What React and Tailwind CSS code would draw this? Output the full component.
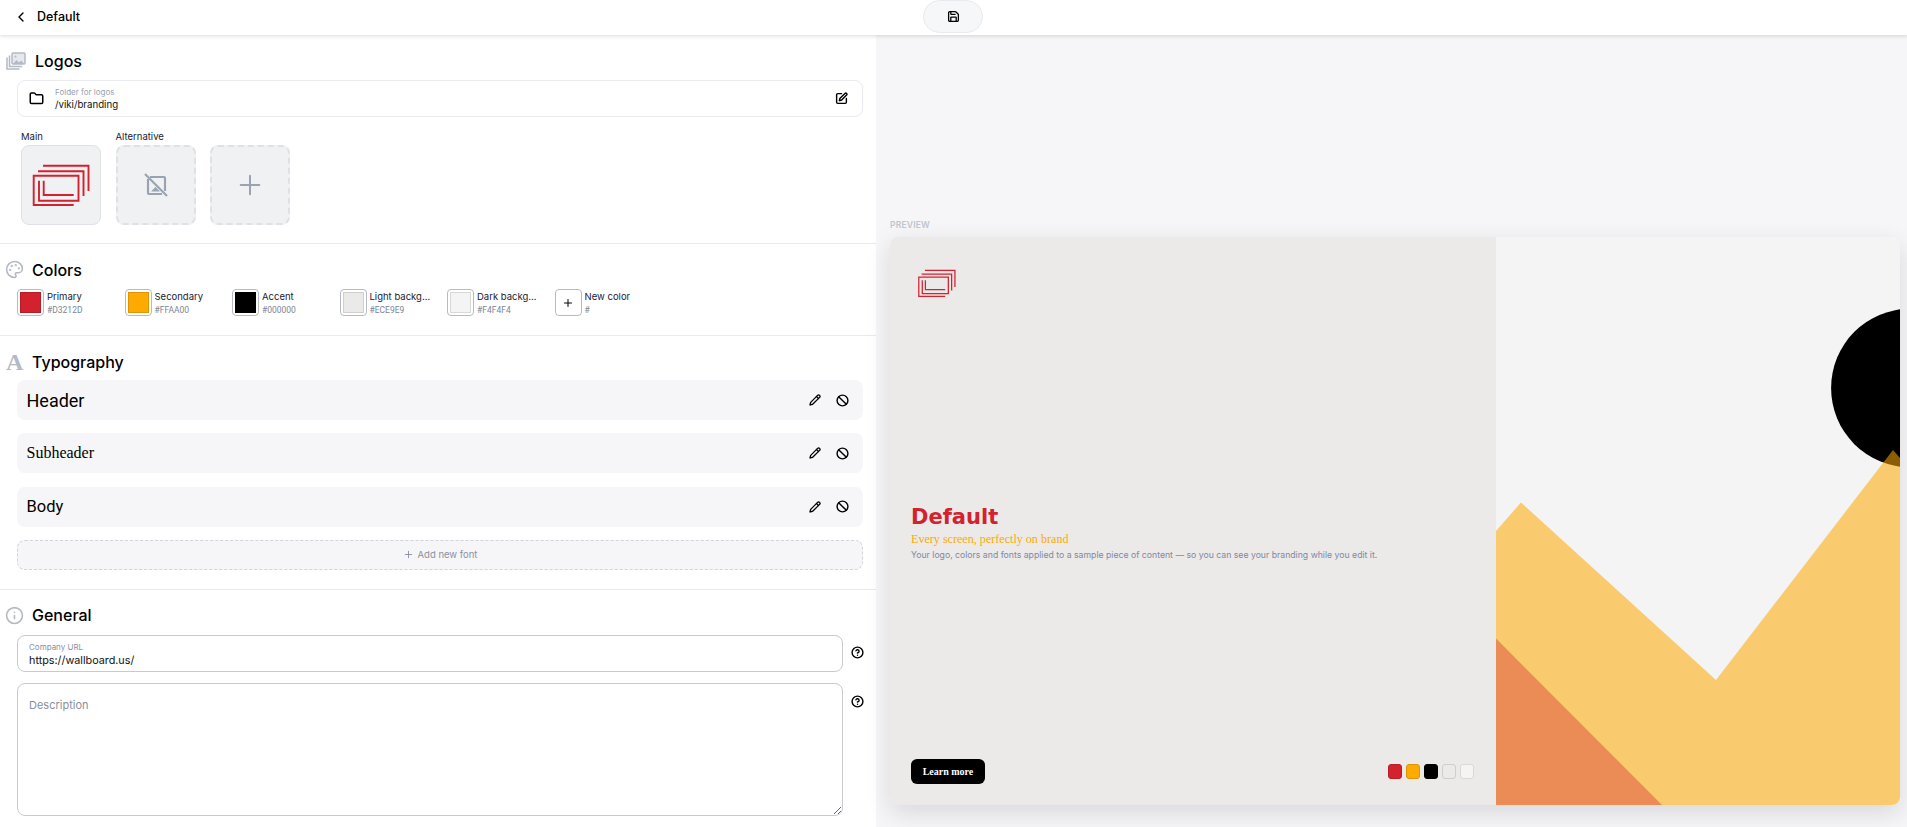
import React from 'react';
import { ChevronLeft, Folder, SquarePen, Save, Pencil, Ban, CircleHelp, Plus, Palette, Info } from 'lucide-react';

const colors = [
  { name: 'Primary', hex: '#D3212D', fill: 'bg-[#D3212D] border-[#b81c27]' },
  { name: 'Secondary', hex: '#FFAA00', fill: 'bg-[#FFAA00] border-[#e09500]' },
  { name: 'Accent', hex: '#000000', fill: 'bg-[#000000] border-[#000000]' },
  { name: 'Light background', hex: '#ECE9E9', fill: 'bg-[#ECE9E9] border-[#d0cdcd]' },
  { name: 'Dark background', hex: '#F4F4F4', fill: 'bg-[#F4F4F4] border-[#d8d8d8]' },
];

const fonts = [
  { name: 'Header', cls: "font-['Roboto',sans-serif] text-[18px]" },
  { name: 'Subheader', cls: "font-['Liberation_Serif',serif] text-[16px]" },
  { name: 'Body', cls: "font-['Roboto',sans-serif] text-[16.5px] pt-[1px]" },
];

function BrandLogo({ className }) {
  return (
    <svg viewBox="0 0 66 52" className={className} fill="none" stroke="#D3212D" strokeWidth="1.9">
      <path d="M15 6.7H60.5V32" />
      <path d="M10 12.3H55.5V37" />
      <path d="M45.7 46H5.7V16.7H50.5V41.7H11V21.7" />
      <path d="M15.7 21.7V36H45.7" />
    </svg>
  );
}

function LogosIcon() {
  return (
    <svg viewBox="0 0 20 18" className="w-[20px] h-[18px]" fill="none" stroke="#b4b9c6" strokeWidth="1.5">
      <rect x="6" y="1" width="13" height="11" rx="1" fill="#e6e8ee" />
      <path d="M7 12l3.5-4 2.5 2.5 2-2 3.5 3.5z" fill="#b4b9c6" stroke="none" />
      <circle cx="9.5" cy="4.5" r="1" fill="#b4b9c6" stroke="none" />
      <path d="M3.5 3.5V14.5H16" />
      <path d="M1 5.5V17H13.5" />
    </svg>
  );
}

function NoImageIcon() {
  return (
    <svg viewBox="0 0 24 24" className="w-[24px] h-[24px]" fill="none" stroke="#9aa3b2" strokeWidth="2.2">
      <path d="M6 4H20a1 1 0 0 1 1 1V18" />
      <path d="M4 6V20a1 1 0 0 0 1 1H18" />
      <path d="M7 18.5l4.5-4.5 4.5 4.5z" fill="#9aa3b2" stroke="none" />
      <path d="M1 1L23 23" />
    </svg>
  );
}

function SectionTitle({ icon, title, textClass = 'w-[26px]' }) {
  return (
    <div className="flex items-center h-[24px] pt-[1px] pl-[6px]">
      <div className={`${textClass} shrink-0 flex items-center`}>{icon}</div>
      <h2 className="text-[16px] font-medium text-black">{title}</h2>
    </div>
  );
}

function LogoTile({ label, dashed, children }) {
  return (
    <div className="w-[80px]">
      <div className="h-[12px] text-[9.5px] leading-[12px] text-[#1c2230] mb-[2px] whitespace-nowrap">{label}</div>
      <div className={`w-[80px] h-[80px] rounded-lg bg-[#f0f1f3] flex items-center justify-center ${dashed ? 'border-2 border-dashed border-[#dfe1e6]' : 'border border-[#dfe1e6]'}`}>
        {children}
      </div>
    </div>
  );
}

function ColorItem({ name, hex, children }) {
  return (
    <div className="w-[107.5px] flex gap-[3px]">
      {children}
      <div className="min-w-0 pt-[1px]">
        <div className="w-[62px] truncate text-[9.5px] leading-[13px] h-[13px] text-[#1c2230]">{name}</div>
        <div className="text-[8.5px] leading-[12px] mt-[1px] text-[#7d8494] font-['Roboto',sans-serif]">{hex}</div>
      </div>
    </div>
  );
}

export default function App() {
  return (
    <div className="h-screen w-full overflow-hidden flex flex-col bg-white font-['Inter',sans-serif]">
      <header className="relative z-10 h-[35px] shrink-0 bg-white shadow-[0_1px_4px_rgba(20,24,40,0.16)] grid grid-cols-[923px_60px_1fr] items-start">
        <div className="flex items-center h-[35px] pl-[13px]">
          <ChevronLeft size={16} strokeWidth={2} className="text-black mb-[2px]" />
          <span className="ml-[8px] text-[12.5px] font-medium text-black">Default</span>
        </div>
        <button className="w-[60px] h-[33px] rounded-full bg-[#f6f7f9] border border-[#e8eaee] flex items-center justify-center">
          <Save size={13} strokeWidth={2.4} className="text-black" />
        </button>
        <div />
      </header>

      <div className="flex-1 flex min-h-0">
        <div className="w-[876px] shrink-0 bg-white">
          <section className="pt-[13px] pb-[18px] border-b border-[#e8e9ec]">
            <SectionTitle icon={<LogosIcon />} title="Logos" textClass="w-[29px]" />
            <div className="mt-[8px] ml-[17px] mr-[13px] h-[37px] border border-[#e8eaf0] rounded-lg flex items-center pl-[11px] pr-[14px]">
              <Folder size={15} strokeWidth={2.4} className="text-black" />
              <div className="ml-[11px] flex-1">
                <div className="text-[8px] leading-[11px] text-[#9aa0ae]">Folder for logos</div>
                <div className="text-[9.7px] leading-[13px] text-[#111]">/viki/branding</div>
              </div>
              <SquarePen size={13} strokeWidth={2.6} className="text-black" />
            </div>
            <div className="mt-[14px] pl-[21px] flex gap-[14.5px]">
              <LogoTile label="Main">
                <BrandLogo className="w-[66px] h-[52px]" />
              </LogoTile>
              <LogoTile label="Alternative" dashed>
                <NoImageIcon />
              </LogoTile>
              <LogoTile label="" dashed>
                <Plus size={32} strokeWidth={1.5} className="text-[#9aa3b2]" />
              </LogoTile>
            </div>
          </section>

          <section className="pt-[13px] pb-[19px] border-b border-[#e8e9ec]">
            <SectionTitle icon={<Palette size={19} strokeWidth={2} className="text-[#b4b9c6] -ml-[1px]" />} title="Colors" />
            <div className="mt-[8px] pl-[17px] flex">
              {colors.map((c) => (
                <ColorItem key={c.name} name={c.name} hex={c.hex}>
                  <div className="w-[27px] h-[27px] shrink-0 rounded-[4px] border border-[#b5bac4] bg-white p-[2px]">
                    <div className={`w-full h-full border ${c.fill}`} />
                  </div>
                </ColorItem>
              ))}
              <ColorItem name="New color" hex="#">
                <div className="w-[27px] h-[27px] shrink-0 rounded-[4px] border border-[#b5bac4] bg-white flex items-center justify-center">
                  <Plus size={12} strokeWidth={2} className="text-black" />
                </div>
              </ColorItem>
            </div>
          </section>

          <section className="pt-[13px] pb-[19px] border-b border-[#e8e9ec]">
            <SectionTitle
              icon={<span className="font-['Liberation_Serif',serif] font-bold text-[24px] leading-[24px] text-[#b4b9c6]">A</span>}
              title="Typography"
            />
            <div className="mt-[7px] ml-[17px] mr-[13px] flex flex-col gap-[13.33px]">
              {fonts.map((f) => (
                <div key={f.name} className="h-[40px] rounded-lg bg-[#f6f6f8] flex items-center pl-[9.5px] pr-[14px]">
                  <span className={`flex-1 text-black ${f.cls}`}>{f.name}</span>
                  <Pencil size={12} strokeWidth={2.6} className="text-black mr-[15px]" />
                  <Ban size={13} strokeWidth={2.6} className="text-black" />
                </div>
              ))}
              <button className="h-[30px] rounded-lg bg-[#f6f6f8] border border-dashed border-[#d3d4da] flex items-center justify-center gap-[4px] text-[#8a90a0]">
                <Plus size={11} strokeWidth={2} />
                <span className="text-[9.5px]">Add new font</span>
              </button>
            </div>
          </section>

          <section className="pt-[13px]">
            <SectionTitle icon={<Info size={19} strokeWidth={2} className="text-[#b4b9c6] -ml-[1px]" />} title="General" />
            <div className="mt-[8px] pl-[17px] pr-[12px] flex flex-col gap-[11px]">
              <div className="flex items-start gap-[8px]">
                <div className="flex-1 h-[37px] rounded-lg border border-[#c8cad2] pl-[11px] pt-[6px]">
                  <div className="text-[8px] leading-[11px] text-[#8a90a0]">Company URL</div>
                  <div className="text-[10.8px] leading-[15px] text-[#111]">https://wallboard.us/</div>
                </div>
                <CircleHelp size={13} strokeWidth={2.6} className="mt-[11px] text-black shrink-0" />
              </div>
              <div className="flex items-start gap-[8px]">
                <textarea
                  placeholder="Description"
                  className="flex-1 h-[133px] rounded-lg border border-[#c8cad2] pl-[11px] pt-[12px] text-[11px] leading-[18px] outline-none placeholder:text-[#8a90a0]"
                />
                <CircleHelp size={13} strokeWidth={2.6} className="mt-[12px] text-black shrink-0" />
              </div>
            </div>
          </section>
        </div>

        <div className="flex-1 bg-[#f6f6f8] pl-[14px] pt-[185px]">
          <div className="text-[8.5px] leading-[11px] font-semibold text-[#c0c4ce] tracking-[0.2px]">PREVIEW</div>
          <div className="mt-[6px] w-[1010px] h-[568px] rounded-lg overflow-hidden flex shadow-[0_8px_24px_rgba(20,24,40,0.13)]">
            <div className="w-[606px] shrink-0 bg-[#ECE9E9] flex flex-col pl-[21px] pr-[22px] pb-[21px] pt-[29px]">
              <BrandLogo className="w-[43.6px] h-[34.3px] ml-[4px]" />
              <div className="flex-1 flex flex-col justify-center pt-[7px]">
                <div className="font-['DejaVu_Sans',sans-serif] font-bold text-[21px] leading-[27px] text-[#D3212D]">Default</div>
                <div className="font-['Liberation_Serif',serif] text-[12.1px] leading-[17px] text-[#FFAA00]">Every screen, perfectly on brand</div>
                <div className="text-[8.7px] leading-[15px] text-[#7f88a2]">Your logo, colors and fonts applied to a sample piece of content — so you can see your branding while you edit it.</div>
              </div>
              <div className="flex items-center justify-between">
                <button className="w-[74px] h-[25px] rounded-[6px] bg-black text-white font-['Liberation_Serif',serif] font-bold text-[10px]">Learn more</button>
                <div className="flex gap-[4px]">
                  {colors.map((c) => (
                    <div key={c.hex} className={`w-[14px] h-[15px] rounded-[3px] border ${c.fill}`} />
                  ))}
                </div>
              </div>
            </div>
            <div className="flex-1 bg-[#F4F4F4]">
              <svg viewBox="0 0 404 568" className="w-full h-full block">
                <circle cx="414.5" cy="151" r="79.4" fill="#000000" />
                <polygon points="0,294 25,265.5 220,443 397,213 404,221 404,568 0,568" fill="#FFAA00" fillOpacity="0.55" />
                <polygon points="0,401.6 166,568 0,568" fill="#D3212D" fillOpacity="0.38" />
              </svg>
            </div>
          </div>
        </div>
      </div>
    </div>
  );
}
